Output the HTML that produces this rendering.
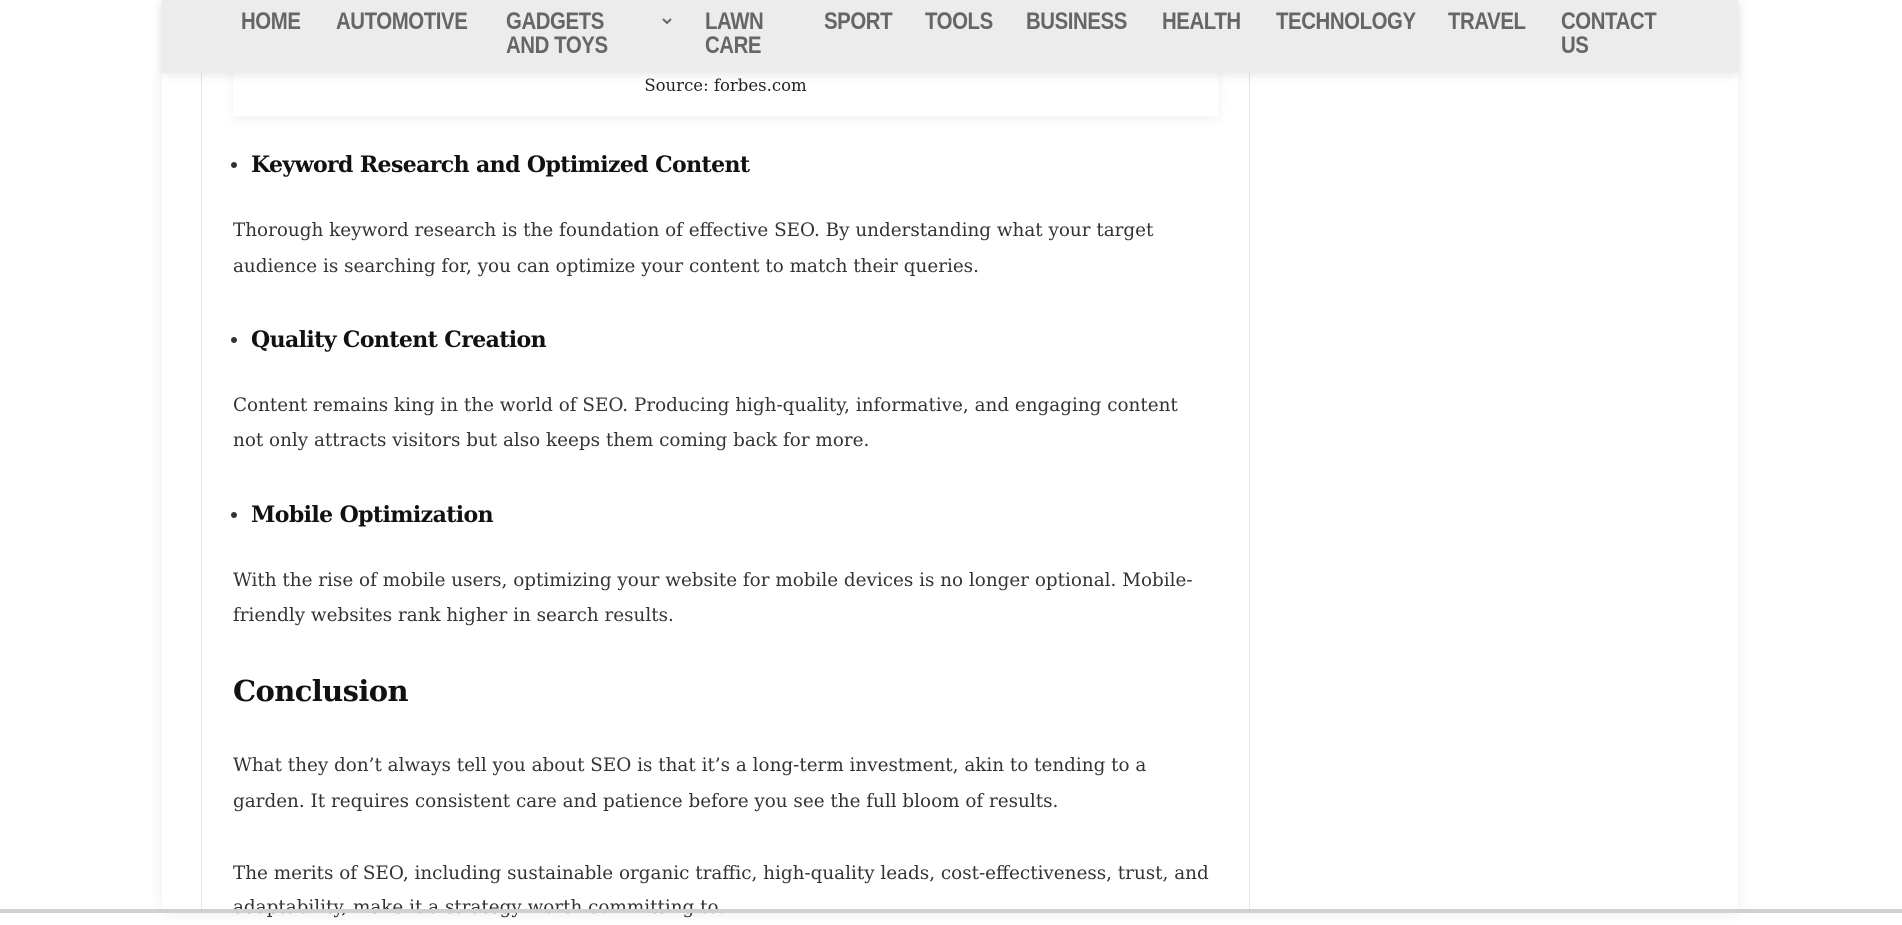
<!DOCTYPE html>
<html><head><meta charset="utf-8"><style>
body{margin:0;width:1902px;height:913px;overflow:hidden;background:#fff;position:relative;font-family:"DejaVu Serif","Liberation Serif",serif}
.wrap{position:absolute;left:162px;top:0;width:1576px;height:913px;background:#fff;box-shadow:0 0 14px rgba(0,0,0,.08)}
.col{position:absolute;left:201px;top:0;width:1049px;height:913px;border-left:1px solid #e5e5e5;border-right:1px solid #e5e5e5;box-sizing:border-box}
.nav{position:absolute;left:162px;top:0;width:1576px;height:73px;background:#ececec;box-shadow:0 3px 8px rgba(0,0,0,.08)}
.n{position:absolute;top:10px;font-family:"Liberation Sans",sans-serif;font-weight:bold;font-size:24px;line-height:24px;color:#666;letter-spacing:-0.5px;transform:scaleX(0.85);transform-origin:0 0;white-space:nowrap}
.card{position:absolute;left:233px;top:60px;width:985px;height:56px;background:#fff;box-shadow:0 4px 12px rgba(0,0,0,.06)}
.t{position:absolute;left:233px;white-space:nowrap;font-size:18.35px;color:#333;line-height:35px}
.h{position:absolute;left:251px;white-space:nowrap;font-size:22px;font-weight:bold;color:#111;line-height:30px;letter-spacing:-0.6px}
.b{position:absolute;left:231px;width:6px;height:6px;border-radius:50%;background:#333}
.bot{position:absolute;left:0;top:909px;width:1902px;height:4px;background:#d0d0d0}
</style></head><body>
<div class="wrap"></div>
<div class="col"></div>
<div class="card"></div>
<div style="position:absolute;left:233px;width:985px;top:75px;text-align:center;font-size:16.5px;color:#222;line-height:22px">Source: forbes.com</div>

<div class="b" style="top:162px"></div><div class="h" style="top:150px">Keyword Research and Optimized Content</div>
<div class="t" style="top:213px">Thorough keyword research is the foundation of effective SEO. By understanding what your target</div>
<div class="t" style="top:249px">audience is searching for, you can optimize your content to match their queries.</div>

<div class="b" style="top:337px"></div><div class="h" style="top:325px">Quality Content Creation</div>
<div class="t" style="top:388px">Content remains king in the world of SEO. Producing high-quality, informative, and engaging content</div>
<div class="t" style="top:423px">not only attracts visitors but also keeps them coming back for more.</div>

<div class="b" style="top:512px"></div><div class="h" style="top:500px">Mobile Optimization</div>
<div class="t" style="top:563px">With the rise of mobile users, optimizing your website for mobile devices is no longer optional. Mobile-</div>
<div class="t" style="top:598px">friendly websites rank higher in search results.</div>

<div class="h" style="left:233px;top:671px;font-size:29px;line-height:40px">Conclusion</div>
<div class="t" style="top:748px">What they don’t always tell you about SEO is that it’s a long-term investment, akin to tending to a</div>
<div class="t" style="top:784px">garden. It requires consistent care and patience before you see the full bloom of results.</div>
<div class="t" style="top:856px">The merits of SEO, including sustainable organic traffic, high-quality leads, cost-effectiveness, trust, and</div>
<div class="t" style="top:890px">adaptability, make it a strategy worth committing to.</div>

<div class="nav"></div>
<div class="n" style="left:241px">HOME</div>
<div class="n" style="left:336px">AUTOMOTIVE</div>
<div class="n" style="left:506px">GADGETS<br>AND TOYS</div>
<svg style="position:absolute;left:661px;top:16px" width="12" height="10" viewBox="0 0 12 10"><path d="M2 3 L6 7 L10 3" fill="none" stroke="#666" stroke-width="2"/></svg>
<div class="n" style="left:705px">LAWN<br>CARE</div>
<div class="n" style="left:824px">SPORT</div>
<div class="n" style="left:925px">TOOLS</div>
<div class="n" style="left:1026px">BUSINESS</div>
<div class="n" style="left:1162px">HEALTH</div>
<div class="n" style="left:1276px">TECHNOLOGY</div>
<div class="n" style="left:1448px">TRAVEL</div>
<div class="n" style="left:1561px">CONTACT<br>US</div>
<div class="bot"></div>
</body></html>
